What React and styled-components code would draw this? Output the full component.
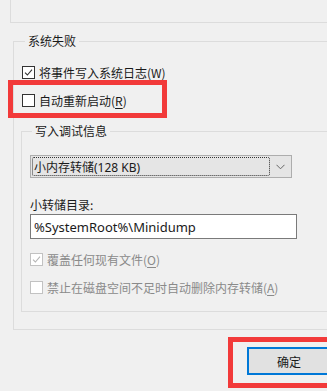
import React from "react";
import styled, { createGlobalStyle } from "styled-components";

const Global = createGlobalStyle`
  html, body {
    margin: 0;
    padding: 0;
    background: #f0f0f0;
  }
  body {
    font-family: "Noto Sans", "Noto Sans CJK SC", sans-serif;
    font-size: 12px;
    color: #1a1a1a;
  }
`;

const Page = styled.div`
  width: 327px;
  height: 391px;
  overflow: hidden;
  background: #f0f0f0;
`;

const PrevGroup = styled.div`
  height: 22px;
  margin-left: 10px;
  margin-right: -20px;
  border-left: 1px solid #dcdcdc;
  border-bottom: 1px solid #dcdcdc;
`;

const Group = styled.fieldset`
  margin: ${(p) => p.$margin};
  padding: ${(p) => p.$padding};
  border: 1px solid #dcdcdc;
  min-width: 0;
  display: flex;
  flex-direction: column;
`;

const Legend = styled.legend`
  padding: 0 3px;
  margin-left: ${(p) => p.$indent || 3}px;
  line-height: 16px;
  font-size: 12px;
  font-family: "Noto Sans CJK SC", sans-serif;
`;

const Row = styled.label`
  position: relative;
  display: flex;
  align-items: center;
  gap: 4px;
  height: 18px;
  margin-top: ${(p) => p.$top || 0}px;
  color: ${(p) => (p.$disabled ? "#8a8a8a" : "#1a1a1a")};
  font-family: "Noto Sans CJK SC", sans-serif;
  white-space: nowrap;
`;

const Box = styled.span`
  width: 11px;
  height: 11px;
  flex: none;
  border: 1px solid ${(p) => (p.$disabled ? "#c2c2c2" : "#333")};
  background: #fff;
  display: flex;
  align-items: center;
  justify-content: center;
`;

const Key = styled.span`
  text-decoration: underline;
  text-underline-offset: 2px;
`;

const Highlight = styled.div`
  position: absolute;
  left: ${(p) => p.$left}px;
  top: ${(p) => p.$top}px;
  width: ${(p) => p.$width}px;
  height: ${(p) => p.$height}px;
  border: 5px solid #f23a3a;
  box-sizing: border-box;
  pointer-events: none;
`;

const Select = styled.div`
  width: 262px;
  height: 23px;
  box-sizing: border-box;
  border: 1px solid #adadad;
  background: #e5e5e5;
  display: flex;
  align-items: center;
  padding: 1px;
`;

const SelectValue = styled.div`
  flex: 1;
  height: 19px;
  box-sizing: border-box;
  border: 1px dotted #333;
  border-radius: 2px;
  display: flex;
  align-items: center;
  padding-left: 1px;
  font-size: 12px;
`;

const Arrow = styled.div`
  width: 20px;
  display: flex;
  justify-content: center;
  align-items: center;
`;

const FieldLabel = styled.div`
  margin-top: 19px;
  line-height: 16px;
  font-family: "Noto Sans CJK SC", sans-serif;
`;

const Input = styled.div`
  margin-top: 1px;
  width: 267px;
  height: 25px;
  box-sizing: border-box;
  border: 1px solid #7a7a7a;
  background: #fff;
  display: flex;
  align-items: center;
  padding-left: 3px;
  font-size: 13px;
`;

const Footer = styled.div`
  display: flex;
  justify-content: flex-end;
  margin-top: 17px;
  margin-right: -4px;
`;

const ButtonWrap = styled.div`
  position: relative;
`;

const Button = styled.button`
  width: 84px;
  height: 28px;
  border: 2px solid #0078d7;
  background: #e1e1e1;
  font-family: "Noto Sans CJK SC", sans-serif;
  font-size: 12px;
  color: #1a1a1a;
  padding: 0;
`;

const Check = ({ checked, disabled }) => (
  <Box $disabled={disabled}>
    {checked && (
      <svg width="9" height="9" viewBox="0 0 9 9">
        <path
          d="M1 4.6 L3.4 7 L8 1.6"
          fill="none"
          stroke={disabled ? "#b5b5b5" : "#333"}
          strokeWidth="1.1"
        />
      </svg>
    )}
  </Box>
);

export default function App() {
  return (
    <Page>
      <Global />
      <PrevGroup />
      <Group $margin="10px -30px 0 13px" $padding="14px 0 17px 8px">
        <Legend>系统失败</Legend>
        <Row>
          <Check checked />
          <span>
            将事件写入系统日志(<Key>W</Key>)
          </span>
        </Row>
        <Row $top={10}>
          <Highlight $left={-14} $top={-11} $width={159} $height={38} />
          <Check />
          <span>
            自动重新启动(<Key>R</Key>)
          </span>
        </Row>
        <Group $margin="14px 0 0 -1px" $padding="16px 0 15px 8px">
          <Legend $indent={2}>写入调试信息</Legend>
          <Select>
            <SelectValue>小内存转储(128 KB)</SelectValue>
            <Arrow>
              <svg width="9" height="6" viewBox="0 0 9 6">
                <path d="M0.5 0.8 L4.5 4.8 L8.5 0.8" fill="none" stroke="#666" strokeWidth="1" />
              </svg>
            </Arrow>
          </Select>
          <FieldLabel>小转储目录:</FieldLabel>
          <Input>%SystemRoot%\Minidump</Input>
          <Row $top={11} $disabled>
            <Check checked disabled />
            <span>
              覆盖任何现有文件(<Key>O</Key>)
            </span>
          </Row>
          <Row $top={10} $disabled>
            <Check disabled />
            <span>
              禁止在磁盘空间不足时自动删除内存转储(<Key>A</Key>)
            </span>
          </Row>
        </Group>
      </Group>
      <Footer>
        <ButtonWrap>
          <Highlight $left={-19} $top={-10} $width={110} $height={51} />
          <Button>确定</Button>
        </ButtonWrap>
      </Footer>
    </Page>
  );
}
